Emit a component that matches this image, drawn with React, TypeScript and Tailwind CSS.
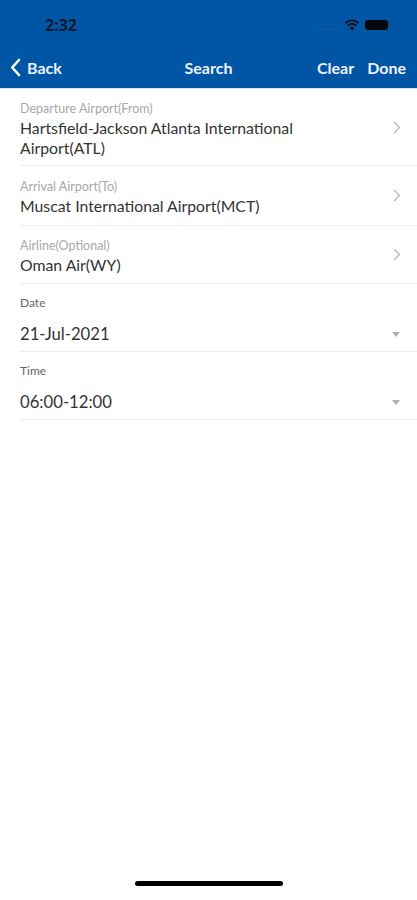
import React from "react";

const font = { fontFamily: "Lato, 'Noto Sans', sans-serif" };

function Chevron() {
  return (
    <svg width="8" height="13" viewBox="0 0 8 13" className="shrink-0">
      <path d="M1.5 1.5 L6.5 6.5 L1.5 11.5" fill="none" stroke="#b5b5b5" strokeWidth="1.3" strokeLinecap="round" strokeLinejoin="round" />
    </svg>
  );
}

function Caret() {
  return (
    <svg width="8" height="5" viewBox="0 0 8 5" className="shrink-0">
      <path d="M0 0 H8 L4 5 Z" fill="#b0b0b0" />
    </svg>
  );
}

function LinkRow({ label, value, h }: { label: string; value: string; h: string }) {
  return (
    <div className={`ml-[20px] border-b border-[#ececec] flex items-center pr-[16px] ${h}`}>
      <div className="flex-1 min-w-0 pr-[30px] pt-[5px]">
        <div className="text-[12.5px] leading-[14px] text-[#a8a8a8]">{label}</div>
        <div className="text-[15.8px] leading-[20px] text-[#333] mt-[2px]">{value}</div>
      </div>
      <Chevron />
    </div>
  );
}

function SelectRow({ label, value }: { label: string; value: string }) {
  return (
    <div className="ml-[20px] border-b border-[#ececec] h-[68px] flex flex-col pr-[17px]">
      <div className="text-[12px] leading-[14px] text-[#666] mt-[12px]">{label}</div>
      <div className="flex items-center justify-between mt-[14px]">
        <div className="text-[16.7px] leading-[20px] text-[#333]">{value}</div>
        <Caret />
      </div>
    </div>
  );
}

export default function App() {
  return (
    <div className="w-[417px] h-[900px] bg-white flex flex-col overflow-hidden" style={font}>
      <div className="bg-[#0055a5] h-[88px] shrink-0 flex flex-col">
        <div className="h-[46px] flex items-center justify-between pl-[45px] pr-[26px] pt-[3px]">
          <span className="text-[16px] font-bold text-[#0d1b33]" style={{ fontFamily: "'Open Sans', sans-serif" }}>2:32</span>
          <div className="flex items-center gap-[5px]">
            <div className="flex items-end gap-[2px] h-[10px] mr-[2px]">
              <div className="w-[3px] h-[1px] bg-[#2a5a96]" />
              <div className="w-[3px] h-[1px] bg-[#2a5a96]" />
              <div className="w-[3px] h-[1px] bg-[#2a5a96]" />
              <div className="w-[3px] h-[1px] bg-[#2a5a96]" />
            </div>
            <svg width="16" height="12" viewBox="0 0 16 12">
              <path d="M8 11.5 L5.6 8.7 A3.6 3.6 0 0 1 10.4 8.7 Z" fill="#0a0f1a" />
              <path d="M3.6 6.6 A6.3 6.3 0 0 1 12.4 6.6" fill="none" stroke="#0a0f1a" strokeWidth="1.7" />
              <path d="M1.2 4.1 A9.8 9.8 0 0 1 14.8 4.1" fill="none" stroke="#0a0f1a" strokeWidth="1.7" />
            </svg>
            <div className="flex items-center">
              <div className="w-[23px] h-[10px] rounded-[3px] bg-[#05070c]" />
              <div className="w-[2px] h-[4px] bg-[#2b4b7a] rounded-r-[1px] ml-[1px]" />
            </div>
          </div>
        </div>
        <div className="h-[42px] flex items-center justify-between pl-[10px] pr-[11px] text-white text-[16px] font-bold relative pt-[1px]">
          <div className="flex items-center gap-[6px]">
            <svg width="11" height="19" viewBox="0 0 11 19">
              <path d="M9 2 L2.2 9.5 L9 17" fill="none" stroke="white" strokeWidth="2.6" strokeLinecap="round" strokeLinejoin="round" />
            </svg>
            <span className="text-[#eef2fa]">Back</span>
          </div>
          <span className="absolute left-1/2 -translate-x-1/2 text-[#eef2fa]">Search</span>
          <div className="flex items-center gap-[13px] text-[#eef2fa]">
            <span>Clear</span>
            <span>Done</span>
          </div>
        </div>
      </div>
      <div className="h-[1px] bg-[#d8e4f0]" />
      <LinkRow label="Departure Airport(From)" value="Hartsfield-Jackson Atlanta International Airport(ATL)" h="h-[77px]" />
      <LinkRow label="Arrival Airport(To)" value="Muscat International Airport(MCT)" h="h-[60px]" />
      <LinkRow label="Airline(Optional)" value="Oman Air(WY)" h="h-[58px]" />
      <SelectRow label="Date" value="21-Jul-2021" />
      <SelectRow label="Time" value="06:00-12:00" />
      <div className="flex-1" />
      <div className="h-[19px] flex justify-center shrink-0">
        <div className="w-[148px] h-[5px] rounded-full bg-black" />
      </div>
    </div>
  );
}
